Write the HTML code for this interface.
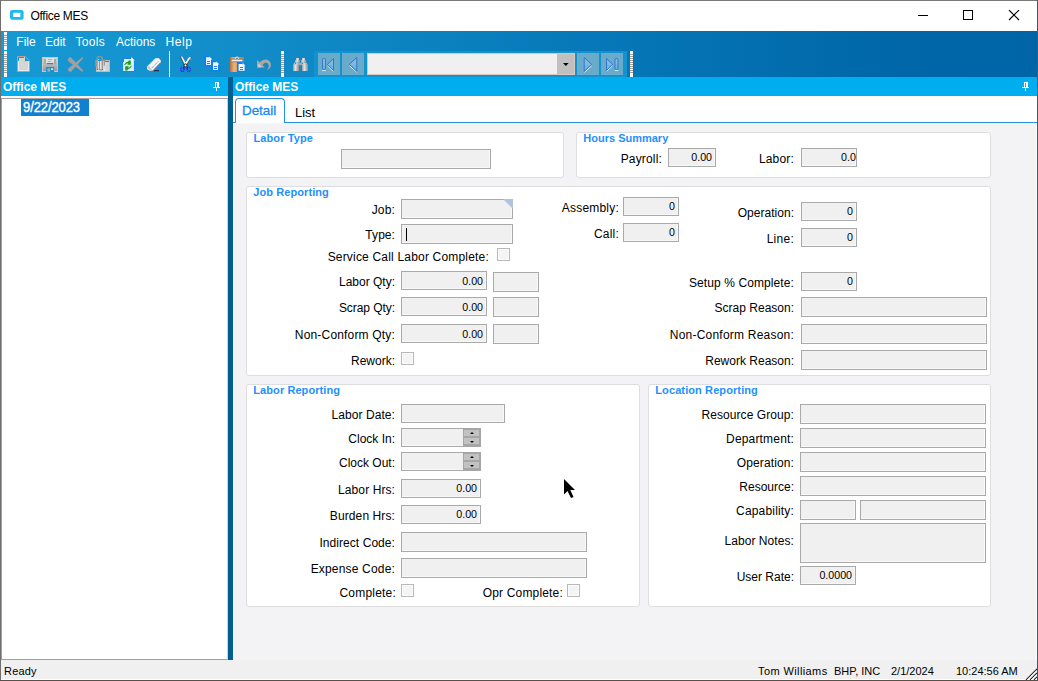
<!DOCTYPE html>
<html>
<head>
<meta charset="utf-8">
<title>Office MES</title>
<style>
*{box-sizing:border-box;margin:0;padding:0}
html,body{width:1038px;height:681px;overflow:hidden;background:#fff}
body{font-family:"Liberation Sans",sans-serif;font-size:12px;color:#000;position:relative}
.abs{position:absolute}
#win{position:absolute;left:0;top:0;width:1038px;height:681px;background:#fff;overflow:hidden}
/* window frame */
#bT{left:0;top:0;width:1038px;height:1px;background:#7a7a7a}
#bL{left:0;top:0;width:1px;height:681px;background:#6e6e6e}
#bR{left:1037px;top:0;width:1px;height:681px;background:#4a5560}
#bB{left:0;top:680px;width:1038px;height:1px;background:#5a5048}
/* title */
#title{left:30.500px;top:8.5px;font-size:12px;line-height:15px;letter-spacing:-0.300px;white-space:nowrap;color:#000}
/* toolbar */
#tb{left:1px;top:31px;width:1036px;height:47px;background:linear-gradient(90deg,#1699d3 0%,#1595d0 10%,#0575b6 62%,#0067a8 86%,#0065a6 100%)}
.menu{top:35px;font-size:12px;line-height:14px;color:#fff;white-space:nowrap}
/* panel headers */
.phead{top:77px;height:19px;background:#00adee;color:#fff;font-weight:bold;font-size:12px;line-height:19px;padding-top:1px;white-space:nowrap}
#split{left:228px;top:77px;width:5px;height:583px;background:#005f90}
/* content */
#rbody{left:233px;top:123px;width:803px;height:537px;background:#f3f3f6;border-left:1px solid #fff;border-top:1px solid #fbf5f2}
#tabs{left:233px;top:96px;width:804px;height:27px;background:#fff}
#tabline{left:233px;top:122px;width:804px;height:1px;background:#2191e3}
/* group boxes */
.gb{position:absolute;background:#fff;border:1px solid #dedede;border-radius:3px}
.gt{position:absolute;font-size:11px;font-weight:bold;color:#1e90ff;line-height:13px;white-space:nowrap}
.lb{position:absolute;font-size:12px;line-height:14px;text-align:right;white-space:nowrap;color:#000}
.f{position:absolute;background:#f0f0f0;border:1px solid #a9a9a9;box-shadow:inset -1px -1px 0 #f8f8f8;font-size:10.67px;line-height:14px;text-align:right;padding:1px 3px 0 0;overflow:hidden;white-space:nowrap;color:#000}
.cb{position:absolute;width:13px;height:13px;background:#f4f4f4;border:1px solid #b8b8b8;box-shadow:inset 0 0 0 1px #fbfbfb}
#tabDetail{left:235px;top:98px;width:50px;height:25px;background:#fff;border:1px solid #2191e3;border-bottom:none;border-radius:4px 4px 0 0}
.grip{position:absolute;width:3px;background:repeating-linear-gradient(180deg,#fff 0,#fff 1px,#a8a098 1px,#a8a098 2px);border-top:2px solid #fff;border-bottom:3px solid #fff}
.nb{position:absolute;top:53px;width:22px;height:22px;background:#68abcb}
.spin{position:absolute;width:18px;height:19px;background:#a6a6a6}
.spin i{position:absolute;left:1px;top:2px;width:15px;height:6px;background:#c2c2c2}
.spin svg{position:absolute}
/* status */
#status{left:1px;top:660px;width:1036px;height:20px;border-bottom:1px solid #fff;background:#f0f0f0;font-size:11px}
.st{position:absolute;top:665px;font-size:11px;line-height:13px;white-space:nowrap;color:#000}
</style>
</head>
<body>
<div id="win">
  <!-- title bar -->
  <svg class="abs" style="left:10px;top:10px" width="15" height="11" viewBox="0 0 15 11"><rect x="0" y="0" width="13.600" height="9.800" rx="2.200" ry="2.200" fill="#1eb9ee"/><rect x="3.100" y="2.800" width="7.300" height="4.200" rx="0.500" fill="#fff"/></svg>
  <div id="title" class="abs">Office MES</div>
  <svg class="abs" style="left:918px;top:10px" width="102" height="11" viewBox="0 0 102 11" shape-rendering="crispEdges">
    <rect x="0" y="5" width="10" height="1" fill="#000"/>
    <rect x="45.5" y="0.5" width="9" height="9" fill="none" stroke="#000" stroke-width="1"/>
    <g shape-rendering="auto" stroke="#000" stroke-width="1.1"><line x1="91" y1="0" x2="101" y2="10"/><line x1="101" y1="0" x2="91" y2="10"/></g>
  </svg>

  <!-- toolbar -->
  <div id="tb" class="abs"></div>
  <div class="abs menu" style="left:16.300px">File</div>
  <div class="abs menu" style="left:45px">Edit</div>
  <div class="abs menu" style="left:75.500px;letter-spacing:0.300px">Tools</div>
  <div class="abs menu" style="left:116px">Actions</div>
  <div class="abs menu" style="left:165.600px;letter-spacing:0.550px">Help</div>

  <!-- grips -->
  <div class="grip" style="left:4px;top:32px;height:18px"></div>
  <div class="grip" style="left:4px;top:51px;height:26px"></div>
  <div class="grip" style="left:281px;top:51px;height:26px"></div>
  <div class="grip" style="left:630px;top:51px;height:26px"></div>
  <div class="abs" style="left:169px;top:51px;width:1px;height:26px;background:#fff"></div>

  <!-- nav strip -->
  <div class="abs" style="left:314px;top:51px;width:313px;height:26px;background:#1393cd"></div>
  <div class="nb" style="left:318px"></div>
  <div class="nb" style="left:342px"></div>
  <div class="nb" style="left:577px"></div>
  <div class="nb" style="left:601px"></div>
  <div class="abs" style="left:367px;top:53px;width:208px;height:22px;background:#f0f0f0;border:1px solid #d8c8c0"></div>
  <div class="abs" style="left:557px;top:54px;width:17px;height:20px;background:#c0c0c0"></div>
  <svg class="abs" style="left:563px;top:63px" width="6" height="3" viewBox="0 0 6 3"><path d="M0,0 H5.600 L2.800,3 Z" fill="#000"/></svg>

  <!-- icons -->
  <svg class="abs" style="left:0;top:50px" width="640" height="28" viewBox="0 50 640 28">
    <defs>
      <linearGradient id="gs" x1="0" y1="0" x2="0" y2="1"><stop offset="0" stop-color="#dadada"/><stop offset="1" stop-color="#969696"/></linearGradient>
      <linearGradient id="gp" x1="0" y1="0" x2="1" y2="0"><stop offset="0" stop-color="#bf6f2e"/><stop offset=".3" stop-color="#e9b487"/><stop offset=".6" stop-color="#d99657"/><stop offset="1" stop-color="#c27434"/></linearGradient>
      <linearGradient id="gb" x1="0" y1="0" x2="1" y2="0"><stop offset="0" stop-color="#9a9a9a"/><stop offset=".4" stop-color="#e4e4e4"/><stop offset="1" stop-color="#8c8c8c"/></linearGradient>
      <linearGradient id="gpg" x1="0" y1="0" x2="1" y2="0"><stop offset="0" stop-color="#ececec"/><stop offset="1" stop-color="#cfcfcf"/></linearGradient>
    </defs>
    <!-- new -->
    <path d="M17.500,56.500 H25.200 L29.500,60.800 V71.500 H17.500 Z" fill="none" stroke="#b3a39b" stroke-width="1"/>
    <path d="M19,58 H24 V61.500 H29 V71 H18 V61 H19 Z" fill="#d6d6d6"/>
    <path d="M18.500,61 V70.500 H28.500 V62" fill="none" stroke="#e9e9e9" stroke-width="1"/>
    <path d="M24.500,57 V61.500 H29" fill="none" stroke="#d9cfca" stroke-width="1"/>
    <!-- save -->
    <rect x="42.500" y="57.500" width="15" height="14" fill="url(#gs)" stroke="#d2c4bd" stroke-width="1"/>
    <rect x="44" y="59" width="2" height="5" fill="#a9a9a9"/><rect x="54" y="59" width="2" height="5" fill="#a9a9a9"/>
    <rect x="46" y="58" width="8" height="5" fill="#dfdfdf"/>
    <rect x="48" y="59" width="4" height="1" fill="#b4b4b4"/><rect x="48" y="61" width="3" height="1" fill="#b4b4b4"/>
    <rect x="47" y="63" width="6" height="1.200" fill="#0f8fd0"/>
    <rect x="46" y="67" width="8" height="5" fill="#1292cf"/>
    <rect x="47.500" y="68.500" width="2.500" height="3" fill="#bdbdbd"/><rect x="48.500" y="68.500" width="0.700" height="3" fill="#8a8a8a"/>
    <rect x="51" y="68.300" width="2.200" height="1.700" fill="#efe3df"/>
    <!-- delete X -->
    <path d="M68,60.200 Q67.800,57.300 70.800,57.200 L83.200,70.600 L82.700,71.900 L76,67 L69,61.800 Z" fill="#a3a09f"/>
    <path d="M68,68.800 L82.700,57 L83.200,58.300 L71,71.700 Q68,72.300 68,68.800 Z" fill="#a3a09f"/>
    <!-- attach -->
    <rect x="96.500" y="60.500" width="13" height="11" fill="url(#gpg)" stroke="#c7b8b1" stroke-width="1"/>
    <rect x="105" y="61" width="4" height="1" fill="#1292cf"/>
    <rect x="97" y="69" width="8" height="2" fill="#ededed"/>
    <path d="M95.800,66.500 V60 M97.200,69 V58.300 Q97.200,56.600 99.700,56.600 Q102.300,56.600 102.300,58.300 V69.200 Q102.300,70 100.800,70 Q99.300,70 99.300,69.200 V60.200 H104.300 V65.500" fill="none" stroke="#959595" stroke-width="1.300"/>
    <path d="M98.300,68 V59" fill="none" stroke="#dcdcdc" stroke-width="0.900"/>
    <rect x="98" y="60" width="3.500" height="1" fill="#1292cf"/><rect x="97" y="69" width="1.200" height="1.200" fill="#1292cf"/><rect x="102" y="69" width="1.200" height="1.200" fill="#1292cf"/>
    <!-- refresh -->
    <path d="M122.500,57.500 H131.500 L134.500,60.500 V71.500 H122.500 Z" fill="#dcedfc" stroke="#1787f0" stroke-width="1.100"/>
    <rect x="123" y="58" width="8" height="1" fill="#1787f0"/><rect x="123" y="58" width="1" height="4" fill="#1787f0"/>
    <path d="M131.200,57 L134.800,60.600 H131.200 Z" fill="#fff"/>
    <path d="M124,64.900 Q125.500,62 128.200,61.600 L128.800,60.400 H130.800 V64.700 H127.200 L128.300,63.200 Q126.300,63.300 124.800,65.200 Z" fill="#13a313"/>
    <path d="M132,66.100 Q130.500,69 127.800,69.400 L127.200,70.600 H125.200 V66.300 H128.800 L127.700,67.800 Q129.700,67.700 131.200,65.800 Z" fill="#13a313"/>
    <!-- eraser -->
    <path d="M153.300,70.700 H159" stroke="#26264f" stroke-width="1.200"/>
    <path d="M147.200,66.500 L155.500,58.200 L158.600,58 L160.800,60.400 V62.600 L153,70.800 L150,71 L147,69.200 Z" fill="#f3f3f6"/>
    <path d="M160.800,62.600 L153,70.800 L150,71" fill="none" stroke="#7d7d86" stroke-width="1.100"/>
    <path d="M147.200,66.500 L155.500,58.200" fill="none" stroke="#cfe4f3" stroke-width="1" stroke-dasharray="1 1"/>
    <path d="M151.800,68 L158.800,61" fill="none" stroke="#1292cf" stroke-width="0.900" stroke-dasharray="1 1"/>
    <path d="M147.300,67 L150,70.600 L152.500,70.700 L148.800,65.500 Z" fill="#c9c9cf"/>
    <!-- scissors -->
    <path d="M180.200,56.200 L182.300,56.800 L186.800,64.600 L185,66.200 Z" fill="#fff"/><path d="M180.200,56.200 L185,66.200" stroke="#2c2c2c" stroke-width="0.800" fill="none"/>
    <path d="M191.200,57.200 L189,57.300 L184.300,64.600 L186,66.200 Z" fill="#fff"/><path d="M191.200,57.200 L186,66.200" stroke="#2c2c2c" stroke-width="0.800" fill="none"/>
    <path d="M190.900,57.300 L189.400,57.400 L189,59.800 L190.600,59.500 Z" fill="#e6c3b0"/>
    <circle cx="185.500" cy="65.400" r="1.500" fill="#fff" stroke="#111" stroke-width="1"/>
    <path d="M184.100,67.300 Q181.300,66.800 180.700,69.200 Q180.700,71.600 182.800,71.600 Q184.300,70.800 184.100,67.300 Z" fill="none" stroke="#1a2de0" stroke-width="1.500" stroke-dasharray="1 0.600"/><rect x="183.200" y="67" width="1.300" height="2.600" fill="#1228dd"/>
    <path d="M187.100,67.300 Q189.900,66.800 190.500,69.200 Q190.500,71.600 188.400,71.600 Q186.900,70.800 187.100,67.300 Z" fill="none" stroke="#1a2de0" stroke-width="1.500" stroke-dasharray="1 0.600"/><rect x="186.700" y="67" width="1.300" height="2.600" fill="#1228dd"/>
    
    <!-- copy -->
    <g>
      <path d="M204,56 H209.800 L213,59.200 V67 H204 Z" fill="#0e80f0"/>
      <path d="M206,57.200 H209.300 L211,59 V65 H206 Z" fill="#e8f3ff"/>
      <path d="M209.400,56.600 L212.400,59.600 H209.400 Z" fill="#fff"/>
      <rect x="207" y="61" width="3" height="1" fill="#2f7fe0"/><rect x="207" y="63" width="3" height="1" fill="#2f7fe0"/>
    </g>
    <g transform="translate(7,5)">
      <path d="M204,56 H209.800 L213,59.200 V67 H204 Z" fill="#0e80f0"/>
      <path d="M206,57.200 H209.300 L211,59 V65 H206 Z" fill="#e8f3ff"/>
      <path d="M209.400,56.600 L212.400,59.600 H209.400 Z" fill="#fff"/>
      <rect x="207" y="61" width="3" height="1" fill="#2f7fe0"/><rect x="207" y="63" width="3" height="1" fill="#2f7fe0"/>
    </g>
    <!-- paste -->
    <rect x="230" y="57" width="14" height="15" rx="0.800" fill="url(#gp)"/>
    <rect x="231" y="59.200" width="12" height="2.500" rx="1.200" fill="#eef0f2" stroke="#5f6877" stroke-width="0.700"/>
    <path d="M235,59.300 V57.500 Q237,55.300 239,57.500 V59.300 Z" fill="#f1f1f1" stroke="#8a8f98" stroke-width="0.500"/>
    <rect x="236.300" y="57.800" width="1.500" height="1" fill="#444"/>
    <path d="M237,62 H243 L246,65 V72 H237 Z" fill="#0e80f0"/>
    <path d="M238.600,64 H242.300 L244.600,66.300 V70.800 H238.600 Z" fill="#fff"/>
    <path d="M242.600,62.800 L245.600,65.800 H242.600 Z" fill="#e6f2ff"/>
    <rect x="240" y="67" width="3" height="1" fill="#2f7fe0"/><rect x="240" y="69" width="3" height="1" fill="#2f7fe0"/>
    <!-- undo -->
    <path d="M257,60 L257,68 L264.800,67.600 L262.500,65 Q264,62.700 266.300,62.600 Q268.600,63.200 268.900,66 Q268.600,68.400 266.800,70 Q270.600,68.800 271,65 Q270.800,61.300 267,59.600 Q263,58.800 259.700,62.200 Z" fill="#aaa6a4"/>
    <path d="M258.300,63.500 V66.700 H261.800 Z" fill="#d9d9d9"/>
    <!-- binoculars -->
    <rect x="293" y="65" width="6" height="6" fill="url(#gb)"/><rect x="302" y="65" width="6" height="6" fill="url(#gb)"/>
    <path d="M293,65 L294.500,62.500 H300 V65 Z" fill="url(#gb)"/><path d="M308,65 L306.500,62.500 H301 V65 Z" fill="url(#gb)"/>
    <rect x="295" y="60" width="5" height="2.600" fill="url(#gb)"/><rect x="301" y="60" width="5" height="2.600" fill="url(#gb)"/>
    <rect x="296" y="58" width="3" height="2.200" fill="#cfc6c2"/><rect x="302" y="58" width="3" height="2.200" fill="#cfc6c2"/>
    <rect x="297" y="58.600" width="1" height="1" fill="#fff"/><rect x="303" y="58.600" width="1" height="1" fill="#fff"/>
    <rect x="299.500" y="62.700" width="2" height="2.800" fill="#a9a9a9"/>
    <rect x="295" y="63" width="1.200" height="1.200" fill="#1a90e0"/><rect x="302" y="63" width="1.200" height="1.200" fill="#1a90e0"/>
  </svg>
  <!-- nav icons -->
  <svg class="abs" style="left:318px;top:53px" width="306" height="22" viewBox="318 53 306 22">
    <defs><linearGradient id="gn" x1="0" y1="0" x2="0" y2="1"><stop offset="0" stop-color="#86bbe2"/><stop offset=".55" stop-color="#80b8e2"/><stop offset=".56" stop-color="#62b6ee"/><stop offset="1" stop-color="#62b6ee"/></linearGradient></defs>
    <g stroke="#fff" stroke-width="0.900" fill="none" opacity=".85">
      <path d="M322.300,70.600 H325.700"/><path d="M327.600,65.800 L333.300,71.300"/>
      <path d="M349.600,65.800 L356.800,72.300"/>
      <path d="M584.500,72.300 L591.700,65.800"/>
      <path d="M606.700,71.300 L612.400,65.800"/><path d="M614.800,70.600 H618.200"/>
    </g>
    <g fill="url(#gn)" stroke="#2f6fca" stroke-width="0.900" stroke-linejoin="round">
      <rect x="322.500" y="58.500" width="3" height="11" rx="1.200"/>
      <path d="M333.500,58.500 V70.500 L327.300,64.500 Z"/>
      <path d="M356.800,57.500 V71.300 L349.300,64.400 Z"/>
      <path d="M584.200,57.500 V71.300 L591.700,64.400 Z"/>
      <path d="M606.500,58.500 V70.500 L612.700,64.500 Z"/>
      <rect x="615" y="58.500" width="3" height="11" rx="1.200"/>
    </g>
  </svg>

  <!-- panel headers -->
  <div class="abs phead" style="left:1px;width:227px;padding-left:2px">Office MES</div>
  <div class="abs phead" style="left:233px;width:804px;padding-left:2px">Office MES</div>
  <div id="split" class="abs"></div>
  <svg class="abs" style="left:213px;top:82px" width="7" height="9" viewBox="0 0 7 9" shape-rendering="crispEdges"><rect x="2" y="0" width="4" height="1" fill="#fff"/><rect x="2" y="0" width="1" height="5" fill="#fff"/><rect x="4" y="0" width="2" height="5" fill="#fff"/><rect x="0" y="5" width="7" height="1" fill="#fff"/><rect x="3" y="6" width="1" height="3" fill="#fff"/></svg>
  <svg class="abs" style="left:1022px;top:82px" width="7" height="9" viewBox="0 0 7 9" shape-rendering="crispEdges"><rect x="2" y="0" width="4" height="1" fill="#fff"/><rect x="2" y="0" width="1" height="5" fill="#fff"/><rect x="4" y="0" width="2" height="5" fill="#fff"/><rect x="0" y="5" width="7" height="1" fill="#fff"/><rect x="3" y="6" width="1" height="3" fill="#fff"/></svg>

  <!-- left tree -->
  <div class="abs" style="left:1px;top:96px;width:227px;height:564px;background:#fff;border:1px solid #a0a0a0;border-top:none;border-right-color:#d8d0cc"></div>
  <div class="abs" style="left:1px;top:96px;width:227px;height:2px;background:#fbf5f3"></div>
  <div class="abs" style="left:1px;top:98px;width:227px;height:1px;background:#a0a0a0"></div>
  <div class="abs" style="left:21px;top:99px;width:68px;height:17px;background:#1080d0;color:#fff;font-size:13px;line-height:17px;padding-left:2px;letter-spacing:-0.1px"><span style="display:inline-block;transform:scaleY(1.080);transform-origin:50% 78%;-webkit-text-stroke:0.350px #fff">9/22/2023</span></div>

  <!-- right -->
  <div id="tabs" class="abs"></div>
  <div id="rbody" class="abs"></div>
  <div id="tabline" class="abs"></div>
  <div class="abs" style="left:233px;top:96px;width:804px;height:1px;background:#fbf4f1"></div>

  <!-- tabs -->
  <div class="abs" id="tabDetail"></div>
  <div class="abs" style="left:242px;top:102px;font-size:13.400px;line-height:15px;color:#1789f0;-webkit-text-stroke:0.300px #1789f0;transform:translateY(0.700px) scaleY(1.020);transform-origin:50% 50%">Detail</div>
  <div class="abs" style="left:295px;top:105px;font-size:13px;line-height:15px;color:#000;transform:scaleY(1.050);transform-origin:50% 80%">List</div>

  <!-- group boxes -->
  <div class="gb" style="left:246px;top:132px;width:318px;height:46px"></div>
  <div class="gb" style="left:576px;top:132px;width:415px;height:46px"></div>
  <div class="gb" style="left:246px;top:186px;width:745px;height:190px"></div>
  <div class="gb" style="left:246px;top:384px;width:394px;height:223px"></div>
  <div class="gb" style="left:648px;top:384px;width:343px;height:223px"></div>
  <div class="gt" style="left:253.500px;top:132px;letter-spacing:0.100px">Labor Type</div>
  <div class="gt" style="left:583.300px;top:132px">Hours Summary</div>
  <div class="gt" style="left:253.300px;top:186px;letter-spacing:0.080px">Job Reporting</div>
  <div class="gt" style="left:253.300px;top:384px;letter-spacing:0.080px">Labor Reporting</div>
  <div class="gt" style="left:655.300px;top:384px;letter-spacing:0.100px">Location Reporting</div>

  <!-- Labor type -->
  <div class="f" style="left:341px;top:149px;width:150px;height:20px"></div>
  <!-- Hours summary -->
  <div class="lb" style="left:462px;width:200px;top:152px;letter-spacing:0.163px">Payroll:</div>
  <div class="f" style="left:668px;top:148px;width:48px;height:19px">0.00</div>
  <div class="lb" style="left:594px;width:200px;top:152px;letter-spacing:0.183px">Labor:</div>
  <div class="f" style="left:801px;top:148px;width:56px;height:19px;padding:1px 0 0 39px;text-align:left">0.00</div>

  <!-- Job reporting -->
  <div class="lb" style="left:195px;width:200px;top:203px;letter-spacing:0.150px">Job:</div>
  <div class="f" style="left:401px;top:199px;width:112px;height:20px"></div>
  <div class="lb" style="left:195px;width:200px;top:228px;letter-spacing:0.060px">Type:</div>
  <div class="f" style="left:401px;top:224px;width:112px;height:20px"></div>
  <div class="lb" style="left:289px;width:200px;top:250px;letter-spacing:0.189px">Service Call Labor Complete:</div>
  <div class="cb" style="left:497px;top:248px"></div>
  <div class="lb" style="left:195px;width:200px;top:275px">Labor Qty:</div>
  <div class="f" style="left:401px;top:271px;width:86px;height:19px;padding-top:2px">0.00</div>
  <div class="f" style="left:493px;top:272px;width:46px;height:20px"></div>
  <div class="lb" style="left:195px;width:200px;top:301px;letter-spacing:-0.060px">Scrap Qty:</div>
  <div class="f" style="left:401px;top:297px;width:86px;height:19px;padding-top:2px">0.00</div>
  <div class="f" style="left:493px;top:297px;width:46px;height:20px"></div>
  <div class="lb" style="left:195px;width:200px;top:328px;letter-spacing:0.175px">Non-Conform Qty:</div>
  <div class="f" style="left:401px;top:324px;width:86px;height:19px;padding-top:2px">0.00</div>
  <div class="f" style="left:493px;top:324px;width:46px;height:20px"></div>
  <div class="lb" style="left:195px;width:200px;top:354px">Rework:</div>
  <div class="cb" style="left:401px;top:352px"></div>

  <div class="lb" style="left:419px;width:200px;top:201px;letter-spacing:0.211px">Assembly:</div>
  <div class="f" style="left:623px;top:197px;width:56px;height:19px">0</div>
  <div class="lb" style="left:419px;width:200px;top:227px;letter-spacing:0.220px">Call:</div>
  <div class="f" style="left:623px;top:223px;width:56px;height:19px">0</div>
  <div class="lb" style="left:594px;width:200px;top:206px;letter-spacing:0.030px">Operation:</div>
  <div class="f" style="left:801px;top:202px;width:56px;height:19px">0</div>
  <div class="lb" style="left:594px;width:200px;top:232px;letter-spacing:0.260px">Line:</div>
  <div class="f" style="left:801px;top:228px;width:56px;height:19px">0</div>
  <div class="lb" style="left:594px;width:200px;top:276px;letter-spacing:0.100px">Setup % Complete:</div>
  <div class="f" style="left:801px;top:272px;width:56px;height:19px">0</div>
  <div class="lb" style="left:594px;width:200px;top:301px">Scrap Reason:</div>
  <div class="f" style="left:801px;top:297px;width:186px;height:20px"></div>
  <div class="lb" style="left:594px;width:200px;top:328px;letter-spacing:0.216px">Non-Conform Reason:</div>
  <div class="f" style="left:801px;top:324px;width:186px;height:20px"></div>
  <div class="lb" style="left:594px;width:200px;top:354px">Rework Reason:</div>
  <div class="f" style="left:801px;top:350px;width:186px;height:20px"></div>

  <!-- Labor reporting -->
  <div class="lb" style="left:195px;width:200px;top:408px;letter-spacing:0.082px">Labor Date:</div>
  <div class="f" style="left:401px;top:404px;width:104px;height:19px"></div>
  <div class="lb" style="left:195px;width:200px;top:432px">Clock In:</div>
  <div class="f" style="left:401px;top:428px;width:80px;height:19px"></div>
  <div class="lb" style="left:195px;width:200px;top:456px">Clock Out:</div>
  <div class="f" style="left:401px;top:452px;width:80px;height:19px"></div>
  <div class="lb" style="left:195px;width:200px;top:483px;letter-spacing:0.090px">Labor Hrs:</div>
  <div class="f" style="left:401px;top:479px;width:80px;height:19px">0.00</div>
  <div class="lb" style="left:195px;width:200px;top:509px;letter-spacing:0.100px">Burden Hrs:</div>
  <div class="f" style="left:401px;top:505px;width:80px;height:19px">0.00</div>
  <div class="lb" style="left:195px;width:200px;top:536px;letter-spacing:0.064px">Indirect Code:</div>
  <div class="f" style="left:401px;top:532px;width:186px;height:20px"></div>
  <div class="lb" style="left:195px;width:200px;top:562px;letter-spacing:0.177px">Expense Code:</div>
  <div class="f" style="left:401px;top:558px;width:186px;height:20px"></div>
  <div class="lb" style="left:196px;width:200px;top:586px;letter-spacing:0.211px">Complete:</div>
  <div class="cb" style="left:401px;top:584px"></div>
  <div class="lb" style="left:363px;width:200px;top:586px;letter-spacing:0.177px">Opr Complete:</div>
  <div class="cb" style="left:567px;top:584px"></div>

  <!-- Location reporting -->
  <div class="lb" style="left:594px;width:200px;top:408px;letter-spacing:0.080px">Resource Group:</div>
  <div class="f" style="left:800px;top:404px;width:186px;height:20px"></div>
  <div class="lb" style="left:594px;width:200px;top:432px;letter-spacing:0.173px">Department:</div>
  <div class="f" style="left:800px;top:428px;width:186px;height:20px"></div>
  <div class="lb" style="left:594px;width:200px;top:456px;letter-spacing:0.110px">Operation:</div>
  <div class="f" style="left:800px;top:452px;width:186px;height:20px"></div>
  <div class="lb" style="left:594px;width:200px;top:480px">Resource:</div>
  <div class="f" style="left:800px;top:476px;width:186px;height:20px"></div>
  <div class="lb" style="left:594px;width:200px;top:504px;letter-spacing:0.173px">Capability:</div>
  <div class="f" style="left:800px;top:500px;width:56px;height:20px"></div>
  <div class="f" style="left:860px;top:500px;width:126px;height:20px"></div>
  <div class="lb" style="left:594px;width:200px;top:534px;letter-spacing:0.075px">Labor Notes:</div>
  <div class="f" style="left:800px;top:523px;width:186px;height:40px"></div>
  <div class="lb" style="left:594px;width:200px;top:570px">User Rate:</div>
  <div class="f" style="left:800px;top:566px;width:56px;height:19px">0.0000</div>


  <!-- extras -->
  <svg class="abs" style="left:503px;top:199px" width="10" height="10" viewBox="0 0 10 10"><path d="M0,0 H10 V10 Z" fill="#b0c4de"/></svg>
  <div class="abs" style="left:406px;top:228px;width:1px;height:13px;background:#000"></div>
  <div class="spin" style="left:463px;top:428px"><i></i><i style="top:10px"></i><svg width="4" height="2" viewBox="0 0 4 2" style="left:7px;top:4px"><path d="M0,2 L2,0 L4,2 Z" fill="#000"/></svg><svg width="4" height="2" viewBox="0 0 4 2" style="left:7px;top:13px"><path d="M0,0 L2,2 L4,0 Z" fill="#000"/></svg></div>
  <div class="spin" style="left:463px;top:452px"><i></i><i style="top:10px"></i><svg width="4" height="2" viewBox="0 0 4 2" style="left:7px;top:4px"><path d="M0,2 L2,0 L4,2 Z" fill="#000"/></svg><svg width="4" height="2" viewBox="0 0 4 2" style="left:7px;top:13px"><path d="M0,0 L2,2 L4,0 Z" fill="#000"/></svg></div>
  <svg class="abs" style="left:564px;top:479px" width="12" height="20" viewBox="0 0 12 20"><path d="M0,0 L0,15.500 L3.500,12 L7,19 L9.500,18 L6.300,11 L11,11 Z" fill="#000"/></svg>

  <!-- status -->
  <div id="status" class="abs"></div>
  <div class="st" style="left:4px;letter-spacing:0.200px">Ready</div>
  <div class="st" style="left:758px;letter-spacing:0.400px">Tom Williams</div>
  <div class="st" style="left:834px">BHP, INC</div>
  <div class="st" style="left:891px">2/1/2024</div>
  <div class="st" style="left:956px">10:24:56 AM</div>

  <svg class="abs" style="left:1025px;top:668px" width="12" height="12" viewBox="0 0 12 12"><g stroke="#2a2a2a" stroke-width="1.1"><line x1="1" y1="12" x2="12" y2="1"/><line x1="5" y1="12" x2="12" y2="5"/><line x1="9" y1="12" x2="12" y2="9"/></g><g stroke="#fff" stroke-width="1"><line x1="2.4" y1="12" x2="12" y2="2.400"/><line x1="6.400" y1="12" x2="12" y2="6.400"/><line x1="10.400" y1="12" x2="12" y2="10.400"/></g></svg>
  <div id="bT" class="abs"></div><div id="bL" class="abs"></div><div id="bR" class="abs"></div><div id="bB" class="abs"></div>
</div>
</body>
</html>
